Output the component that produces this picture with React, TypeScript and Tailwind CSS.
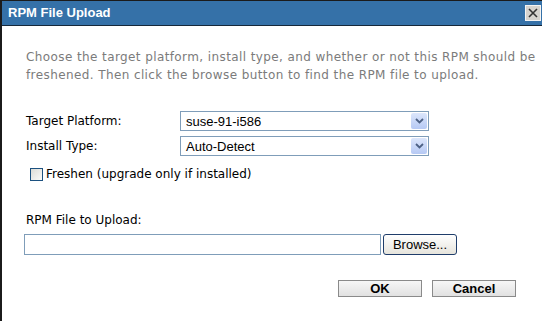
export default function App() {
  const body = { fontFamily: '"DejaVu Sans", Verdana, sans-serif' };
  const arial = { fontFamily: '"Liberation Sans", Arial, sans-serif' };

  const Arrow = () => (
    <span className="flex h-[16px] w-[16px] items-center justify-center rounded-[2px] bg-gradient-to-b from-[#dce6fb] to-[#b6c9f4]">
      <svg width="9" height="6" viewBox="0 0 9 6">
        <path d="M1 1 L4.5 4.5 L8 1" fill="none" stroke="#4d6185" strokeWidth="1.8" />
      </svg>
    </span>
  );

  const Select = ({ value }: { value: string }) => (
    <div className="flex h-[20px] w-[249px] items-center justify-between border border-[#7f9db9] bg-white pl-[5px] pr-[1px]">
      <span className="text-[13px] leading-none text-black" style={arial}>
        {value}
      </span>
      <Arrow />
    </div>
  );

  return (
    <div className="h-[321px] w-[542px] overflow-hidden border-t border-l-2 border-[#1b1b1b] bg-white">
      {/* title bar */}
      <div className="flex h-[25px] items-center justify-between border-b border-[#16283a] bg-[#3571a8] pl-[6px] pr-[1px]">
        <span className="text-[13px] font-bold text-white" style={arial}>
          RPM File Upload
        </span>
        <button className="flex h-[16px] w-[16px] items-center justify-center border border-[#f4f4f4] bg-[#d6d3ce]">
          <svg width="10" height="10" viewBox="0 0 10 10">
            <path d="M1 1 L9 9 M9 1 L1 9" stroke="#333" strokeWidth="1.6" />
          </svg>
        </button>
      </div>

      <div className="pl-[24px] pr-[4px] text-[12px] text-black" style={body}>
        <p className="mt-[22px] text-[12px] leading-[18px] tracking-[0.4px] text-[#7b7b7b]">
          Choose the target platform, install type, and whether or not this RPM should be
          freshened. Then click the browse button to find the RPM file to upload.
        </p>

        <div className="mt-[27px] flex flex-col gap-[5px]">
          <div className="flex items-center">
            <span className="w-[154px]">Target Platform:</span>
            <Select value="suse-91-i586" />
          </div>
          <div className="flex items-center">
            <span className="w-[154px]">Install Type:</span>
            <Select value="Auto-Detect" />
          </div>
        </div>

        <label className="mt-[9px] flex items-center gap-[3px] pl-[4px]">
          <span className="h-[13px] w-[13px] border border-[#1c5180] bg-gradient-to-br from-[#dcdcd7] to-[#fbfbf9]" />
          <span>Freshen (upgrade only if installed)</span>
        </label>

        <div className="mt-[28px]">RPM File to Upload:</div>
        <div className="mt-[5px] flex items-center gap-[2px]">
          <div className="-ml-[2px] h-[21px] w-[357px] border border-[#7f9db9] bg-white" />
          <button
            className="flex h-[21px] w-[74px] items-center justify-center rounded-[3px] border border-[#1f3d6a] bg-gradient-to-b from-white to-[#e6e4dc] text-[13px] text-black"
            style={arial}
          >
            Browse...
          </button>
        </div>

        <div className="mt-[25px] flex justify-end gap-[10px] pr-[22px]">
          <button
            className="flex h-[17px] w-[84px] items-center justify-center border border-[#8a8a8a] bg-gradient-to-b from-[#f7f7f7] to-[#e1e1e1] text-[13px] font-bold text-black"
            style={arial}
          >
            OK
          </button>
          <button
            className="flex h-[17px] w-[84px] items-center justify-center border border-[#8a8a8a] bg-gradient-to-b from-[#f7f7f7] to-[#e1e1e1] text-[13px] font-bold text-black"
            style={arial}
          >
            Cancel
          </button>
        </div>
      </div>
    </div>
  );
}
